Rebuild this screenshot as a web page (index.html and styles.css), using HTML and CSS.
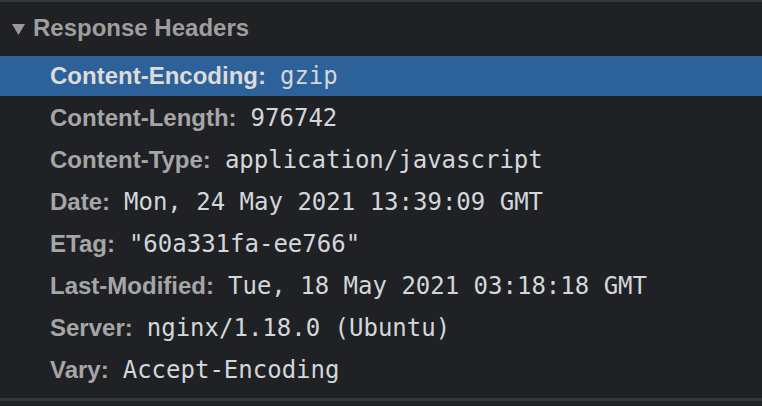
FILE: index.html
```html
<!DOCTYPE html>
<html>
<head>
<meta charset="utf-8">
<link rel="stylesheet" href="styles.css">
</head>
<body>
<div class="panel">
  <div class="section-title">
    <svg class="disclosure" width="13" height="11" viewBox="0 0 13 11"><polygon points="0,0 13,0 6.5,11" fill="#9a9a9a"/></svg>
    <span>Response Headers</span>
  </div>
  <div class="rows">
    <div class="row selected"><span class="name">Content-Encoding:</span><span class="value">gzip</span></div>
    <div class="row"><span class="name">Content-Length:</span><span class="value">976742</span></div>
    <div class="row"><span class="name">Content-Type:</span><span class="value">application/javascript</span></div>
    <div class="row"><span class="name">Date:</span><span class="value">Mon, 24 May 2021 13:39:09 GMT</span></div>
    <div class="row"><span class="name">ETag:</span><span class="value">"60a331fa-ee766"</span></div>
    <div class="row"><span class="name">Last-Modified:</span><span class="value">Tue, 18 May 2021 03:18:18 GMT</span></div>
    <div class="row"><span class="name">Server:</span><span class="value">nginx/1.18.0 (Ubuntu)</span></div>
    <div class="row"><span class="name">Vary:</span><span class="value">Accept-Encoding</span></div>
  </div>
</div>
</body>
</html>
```
FILE: styles.css
```css
html, body {
  margin: 0;
  padding: 0;
  background: #202124;
  height: 100%;
}
.panel {
  border-top: 2px solid #37383a;
  border-bottom: 3px solid #37383a;
  background: #202124;
  padding-bottom: 8px;
}
.section-title {
  display: flex;
  align-items: center;
  height: 40px;
  margin-top: 6px;
  margin-bottom: 8px;
  padding-left: 12px;
  font-family: "Liberation Sans", Arial, sans-serif;
  font-weight: bold;
  font-size: 24px;
  line-height: 40px;
  color: #9e9e9e;
  white-space: nowrap;
}
.disclosure {
  display: block;
  margin-right: 8px;
  margin-top: 2px;
}
.rows {
  display: flex;
  flex-direction: column;
  gap: 2px;
}
.row {
  height: 40px;
  line-height: 40px;
  padding-left: 50px;
  white-space: nowrap;
}
.row.selected {
  background: #2d6199;
}
.name {
  font-family: "Liberation Sans", Arial, sans-serif;
  font-weight: bold;
  font-size: 24px;
  color: #a6a6a6;
}
.selected .name {
  color: #dcdcdc;
}
.value {
  font-family: "DejaVu Sans Mono", Menlo, monospace;
  font-size: 24px;
  color: #d3d7dc;
  margin-left: 14px;
}
```
